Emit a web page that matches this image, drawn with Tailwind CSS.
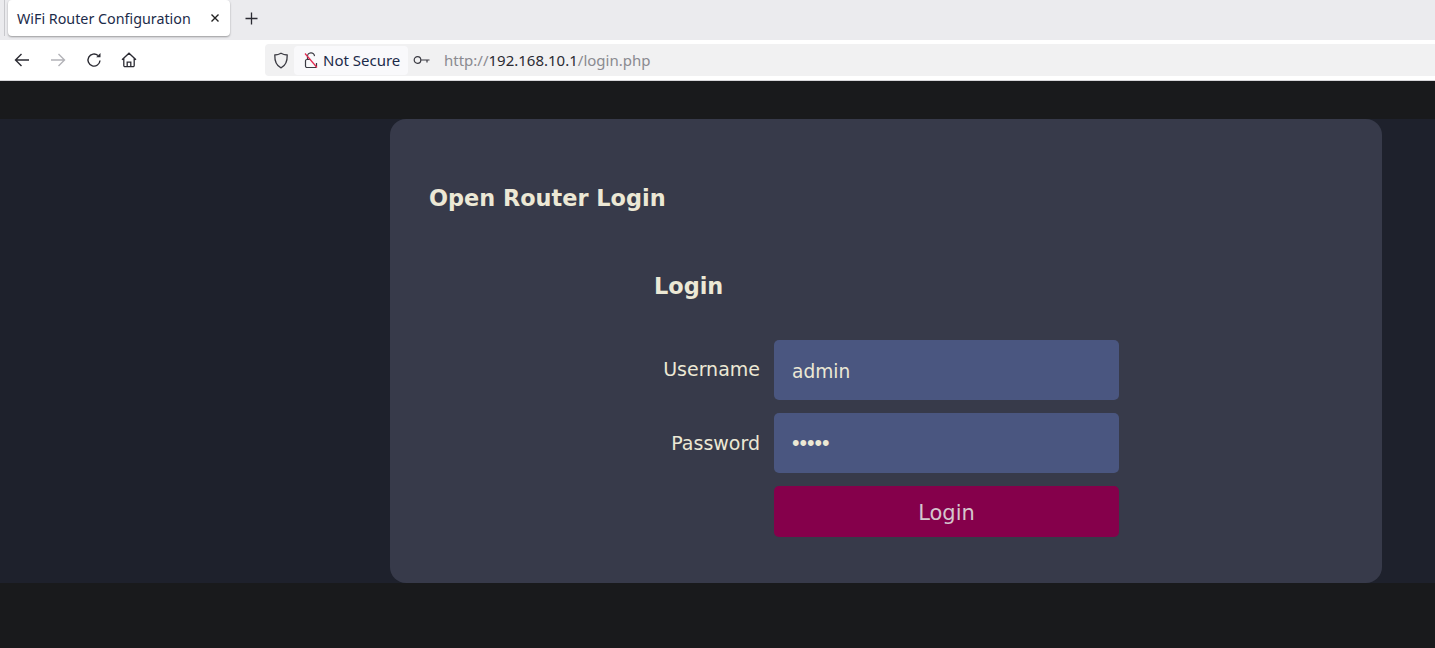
<!DOCTYPE html>
<html lang="en">
<head>
    <meta charset="UTF-8">
    <title>WiFi Router Configuration</title>
    <script src="https://cdn.jsdelivr.net/npm/@tailwindcss/browser@4"></script>
</head>
<body class="h-[648px] w-[1435px] overflow-hidden bg-[#191a1c] font-['DejaVu_Sans',sans-serif]">
    <!-- tab strip -->
    <div class="flex h-[40px] items-start bg-[#ebebee] pl-[4px] font-['Noto_Sans',sans-serif]">
        <div class="h-[36px] w-px bg-[#c8c8cc]"></div>
        <div class="ml-[3px] flex h-[36px] w-[222px] items-center justify-between rounded-[4px] bg-white pl-[9px] pr-[10px] shadow-[0_1px_2px_rgba(0,0,0,0.35)]">
            <span class="pt-[1px] text-[14.3px] text-[#1c2b4a]">WiFi Router Configuration</span>
            <svg width="10" height="10" viewBox="0 0 10 10" fill="none" stroke="#222" stroke-width="1.4"><path d="M1.5 1.5l7 7M8.5 1.5l-7 7"/></svg>
        </div>
        <svg class="ml-[15px] mt-[12px]" width="13" height="13" viewBox="0 0 13 13" fill="none" stroke="#2b2b33" stroke-width="1.3"><path d="M6.5 0.5v12M0.5 6.5h12"/></svg>
    </div>

    <!-- nav bar -->
    <div class="flex h-[41px] items-center border-b border-[#d6d6d9] bg-white font-['Noto_Sans',sans-serif]">
        <div class="flex w-[265px] items-center pl-[14px]">
            <svg width="16" height="16" viewBox="0 0 16 16" fill="none" stroke="#2b2b33" stroke-width="1.4"><path d="M15 8H1.5M7.5 2L1.5 8l6 6"/></svg>
            <svg class="ml-[20px]" width="16" height="16" viewBox="0 0 16 16" fill="none" stroke="#b3b3b8" stroke-width="1.4"><path d="M1 8h13.5M8.5 2l6 6-6 6"/></svg>
            <svg class="ml-[20px]" width="16" height="16" viewBox="0 0 16 16" fill="none" stroke="#2b2b33" stroke-width="1.4"><path d="M14 8.5A6 6 0 1 1 12 3.6"/><path d="M14.5 1v4.300h-4.300z" fill="#2b2b33" stroke="none"/></svg>
            <svg class="ml-[19px]" width="16" height="16" viewBox="0 0 16 16" fill="none" stroke="#2b2b33" stroke-width="1.3"><path d="M1 7.800L8 1.200l7 6.600M2.800 6.500v7a1.200 1.200 0 0 0 1.200 1.200h8a1.200 1.200 0 0 0 1.200-1.200v-7M6.200 14.500v-4.300h3.600v4.300"/></svg>
        </div>
        <div class="flex h-[32px] flex-1 items-center rounded-l-[4px] bg-[#f1f1f2] pl-[8px]">
            <svg width="16" height="17" viewBox="0 0 16 17" fill="none" stroke="#3a3a42" stroke-width="1.300"><path d="M8 1.200c2 1.200 4 1.700 6.200 1.800.2 6-1.600 10.700-6.200 12.800C3.400 13.700 1.600 9 1.800 3 4 2.900 6 2.400 8 1.200z"/></svg>
            <div class="ml-[5px] flex h-[29px] w-[114px] items-center rounded-[4px] bg-[#f9f9fb] pl-[10px]">
                <svg width="14" height="17" viewBox="0 0 14 17" fill="none" stroke="#3a3a42" stroke-width="1.200"><path d="M3.500 7V4.500a3.500 3.500 0 0 1 7-.4M1.500 9a1.500 1.500 0 0 1 1.500-1.500h3M12.500 11v3a1.500 1.500 0 0 1-1.500 1.500H3A1.500 1.500 0 0 1 1.500 14V9"/><path d="M1 1.500l12 14" stroke="#e22850" stroke-width="1.200"/></svg>
                <span class="ml-[5px] text-[15px] text-[#1c2b4a]">Not Secure</span>
            </div>
            <svg class="ml-[5px]" width="17" height="10" viewBox="0 0 17 10" fill="none" stroke="#3a3a42" stroke-width="1.200"><circle cx="4.500" cy="5" r="3.300"/><path d="M8 5h8.500M14 5v2.500"/></svg>
            <span class="ml-[14px] text-[15px] text-[#8a8a90]">http://<span class="text-[#2b2b33]">192.168.10.1</span>/login.php</span>
        </div>
    </div>

    <!-- page -->
    <div class="mt-[38px] flex h-[464px] justify-end bg-[#1e212c] pr-[53px]">
        <div class="w-[992px] rounded-[16px] bg-[#373a4a] pl-[39px] pt-[65px]">
            <h1 class="text-[22.4px] leading-[28px] font-bold text-[#ece8d5]">Open Router Login</h1>
            <div class="ml-[225px] mt-[60px] w-[465px]">
                <h2 class="text-[22.4px] leading-[28px] font-bold text-[#ece8d5]">Login</h2>
                <form class="mt-[40px] grid grid-cols-[106px_345px] gap-x-[14px]">
                    <label class="pt-[15px] text-right text-[19px] leading-[28px] text-[#ece8d5]">Username</label>
                    <input class="h-[60px] rounded-[5px] bg-[#4a5680] px-[18px] pt-[2px] text-[18.6px] text-[#ece8d5] outline-none" type="text" value="admin">
                    <label class="mt-[13px] pt-[16px] text-right text-[19px] leading-[28px] text-[#ece8d5]">Password</label>
                    <input class="mt-[13px] h-[60px] rounded-[5px] bg-[#4a5680] px-[18px] font-['Liberation_Sans',sans-serif] text-[21.5px] text-[#ece8d5] outline-none" type="password" value="admin">
                    <button class="col-start-2 mt-[13px] h-[51px] rounded-[5px] bg-[#85004b] pt-[4px] text-[21px] text-[#d5c6cd]" type="button">Login</button>
                </form>
            </div>
        </div>
    </div>
</body>
</html>
